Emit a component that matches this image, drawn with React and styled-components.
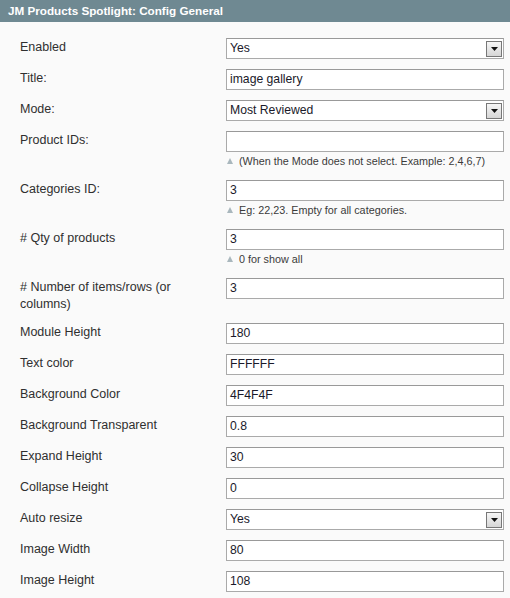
import styled, { createGlobalStyle } from "styled-components";

const GlobalStyle = createGlobalStyle`
  html, body {
    margin: 0;
    padding: 0;
    background: #fafafa;
  }
  body {
    font-family: "Liberation Sans", Arial, sans-serif;
    font-size: 12px;
    color: #2f2f2f;
  }
`;

const Panel = styled.div`
  width: 510px;
  height: 598px;
  background: #fafafa;
  overflow: hidden;
`;

const Header = styled.div`
  height: 22px;
  background: #6f8992;
  color: #fff;
  font-weight: bold;
  font-size: 11.7px;
  line-height: 22px;
  padding: 0 8px;
`;

const Form = styled.div`
  padding: 16px 6px 0 20px;
`;

const Row = styled.div`
  display: flex;
  align-items: flex-start;
  margin-bottom: 10px;
`;

const Label = styled.div`
  width: 206px;
  flex: none;
  font-size: 12.5px;
  line-height: 17px;
  padding-top: 1px;
  padding-right: 20px;
  box-sizing: border-box;
`;

const Value = styled.div`
  width: 279px;
`;

const Input = styled.div`
  height: 21px;
  box-sizing: border-box;
  border: 1px solid #aaa;
  border-top-color: #999;
  background: #fff;
  padding: 0 3px;
  line-height: 19px;
  color: #1a1a2a;
  font-size: 12.2px;
`;

const SelectBox = styled(Input)`
  display: flex;
  align-items: center;
  padding-right: 1px;
`;

const SelectText = styled.span`
  flex: 1;
`;

const ArrowButton = styled.span`
  width: 16px;
  height: 16px;
  box-sizing: border-box;
  border: 1px solid #777;
  background: linear-gradient(#f6f6f6, #d6d6d6);
  display: flex;
  align-items: center;
  justify-content: center;
`;

const Note = styled.div`
  height: 18px;
  line-height: 18px;
  font-size: 10.8px;
  color: #3a3a3a;
  display: flex;
  align-items: center;
  gap: 4px;
`;

const NoteMark = styled.span`
  width: 0;
  height: 0;
  border-left: 3.5px solid transparent;
  border-right: 3.5px solid transparent;
  border-bottom: 6px solid #a9b7bd;
  margin-left: 1px;
  margin-right: 2px;
`;

const Select = ({ value }) => (
  <SelectBox>
    <SelectText>{value}</SelectText>
    <ArrowButton>
      <svg width="7" height="4" viewBox="0 0 7 4">
        <path d="M0 0H7L3.5 4Z" fill="#111" />
      </svg>
    </ArrowButton>
  </SelectBox>
);

const fields = [
  { label: "Enabled", value: "Yes", select: true },
  { label: "Title:", value: "image gallery" },
  { label: "Mode:", value: "Most Reviewed", select: true },
  { label: "Product IDs:", value: "", note: "(When the Mode does not select. Example: 2,4,6,7)" },
  { label: "Categories ID:", value: "3", note: "Eg: 22,23. Empty for all categories." },
  { label: "# Qty of products", value: "3", note: "0 for show all" },
  { label: "# Number of items/rows (or columns)", value: "3" },
  { label: "Module Height", value: "180" },
  { label: "Text color", value: "FFFFFF" },
  { label: "Background Color", value: "4F4F4F" },
  { label: "Background Transparent", value: "0.8" },
  { label: "Expand Height", value: "30" },
  { label: "Collapse Height", value: "0" },
  { label: "Auto resize", value: "Yes", select: true },
  { label: "Image Width", value: "80" },
  { label: "Image Height", value: "108" },
];

export default function App() {
  return (
    <Panel>
      <GlobalStyle />
      <Header>JM Products Spotlight: Config General</Header>
      <Form>
        {fields.map((f) => (
          <Row key={f.label}>
            <Label>{f.label}</Label>
            <Value>
              {f.select ? <Select value={f.value} /> : <Input>{f.value}</Input>}
              {f.note && (
                <Note>
                  <NoteMark />
                  {f.note}
                </Note>
              )}
            </Value>
          </Row>
        ))}
      </Form>
    </Panel>
  );
}
